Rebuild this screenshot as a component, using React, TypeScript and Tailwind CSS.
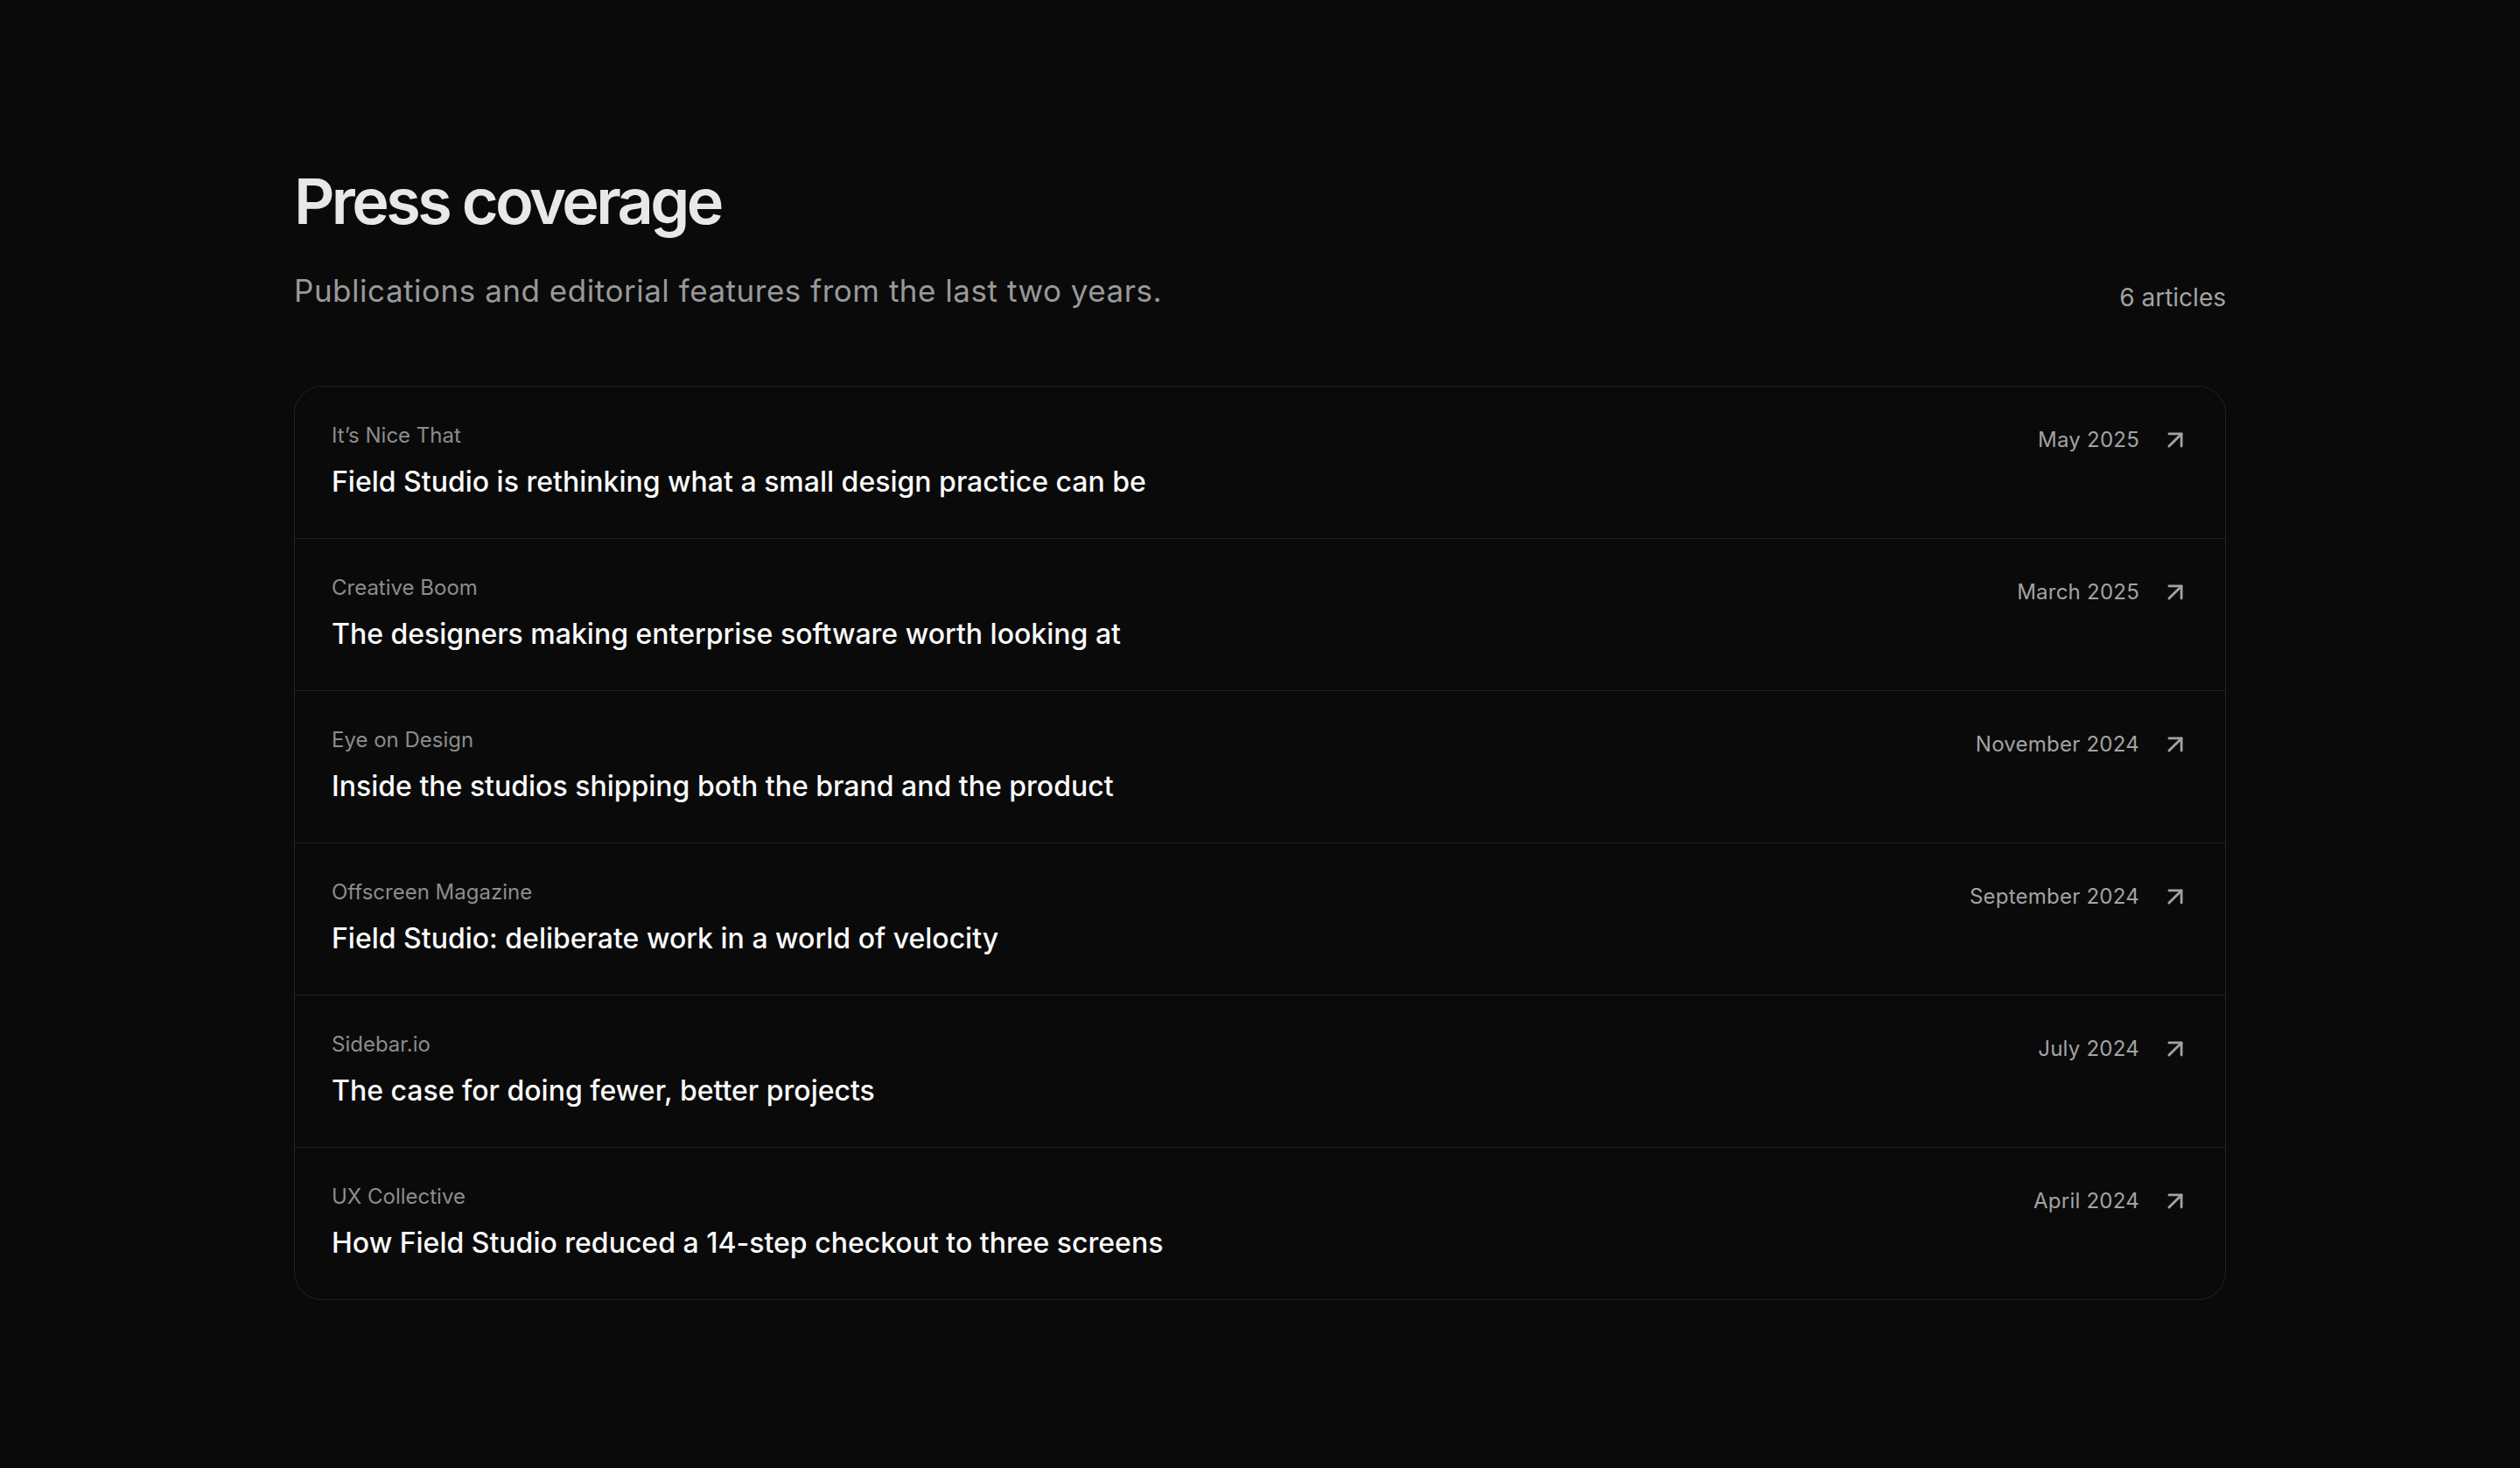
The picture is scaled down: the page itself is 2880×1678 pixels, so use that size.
import { ArrowUpRight } from 'lucide-react'

interface Article {
  outlet: string
  title: string
  date: string
}

const articles: Article[] = [
  { outlet: 'It’s Nice That', title: 'Field Studio is rethinking what a small design practice can be', date: 'May 2025' },
  { outlet: 'Creative Boom', title: 'The designers making enterprise software worth looking at', date: 'March 2025' },
  { outlet: 'Eye on Design', title: 'Inside the studios shipping both the brand and the product', date: 'November 2024' },
  { outlet: 'Offscreen Magazine', title: 'Field Studio: deliberate work in a world of velocity', date: 'September 2024' },
  { outlet: 'Sidebar.io', title: 'The case for doing fewer, better projects', date: 'July 2024' },
  { outlet: 'UX Collective', title: 'How Field Studio reduced a 14-step checkout to three screens', date: 'April 2024' },
]

function ArticleRow({ article }: { article: Article }) {
  return (
    <a
      href="#"
      className="flex items-start justify-between gap-10 pl-[42px] pr-10 pt-10 pb-10 border-t border-[#222222] first:border-t-0 hover:bg-[#111111] transition-colors"
    >
      <div className="flex flex-col gap-[13px] min-w-0">
        <span className="text-[24px] leading-8 text-[#8c8c8c]">{article.outlet}</span>
        <span className="text-[32px] leading-[48px] font-medium text-[#fafafa]">{article.title}</span>
      </div>
      <div className="flex items-center gap-6 mt-1 shrink-0">
        <span className="text-[24px] leading-8 tracking-[0.01em] text-[#a3a3a3]">{article.date}</span>
        <ArrowUpRight size={34} strokeWidth={2} className="text-[#a3a3a3]" />
      </div>
    </a>
  )
}

export default function App() {
  return (
    <div
      className="min-h-screen bg-[#0a0a0a] pt-[190px] pb-40"
      style={{ fontFamily: 'Inter, "Noto Sans", sans-serif' }}
    >
      <div className="w-[2208px] mx-auto">
        <h1 className="text-[72px] leading-[79px] font-semibold tracking-[-0.05em] text-[#e8e8e8]">
          Press coverage
        </h1>
        <div className="flex items-end justify-between mt-[41px]">
          <p className="text-[35px] leading-[44px] tracking-[0.015em] text-[#999999]">
            Publications and editorial features from the last two years.
          </p>
          <span className="text-[28px] leading-[28px] text-[#a3a3a3]">6 articles</span>
        </div>

        <div className="mt-[87px] rounded-[32px] border border-[#222222] overflow-hidden">
          {articles.map(a => (
            <ArticleRow key={a.outlet} article={a} />
          ))}
        </div>
      </div>
    </div>
  )
}
